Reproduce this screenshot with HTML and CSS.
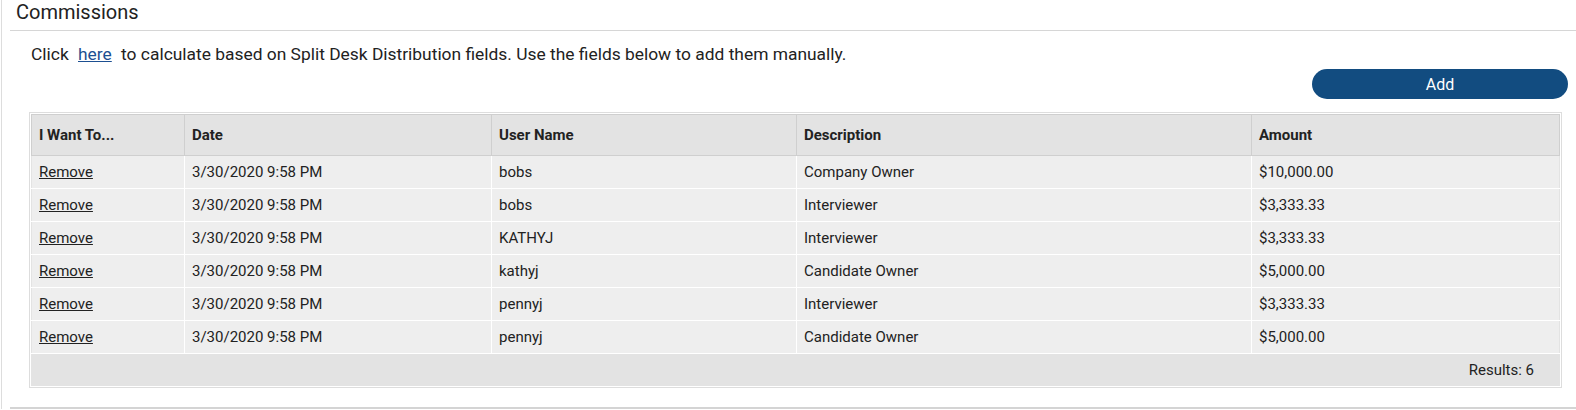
FILE: index.html
```html
<!DOCTYPE html>
<html>
	<head>
		<meta charset="UTF-8">
		<title>Commissions</title>
		<link rel="stylesheet" href="styles.css">
	</head>
	<body>
		<div class="panel">
			<div class="panel_head">
				<h2>Commissions</h2>
			</div>
			<div class="panel_body">
				<p class="intro">Click <a href="#" class="calc_link">here</a> to calculate based on Split Desk Distribution fields. Use the fields below to add them manually.</p>
				<div class="btn_row">
					<button class="add_btn">Add</button>
				</div>
				<div class="grid_box">
					<table class="grid">
						<thead>
							<tr>
								<th class="col_act">I Want To...</th>
								<th class="col_date">Date</th>
								<th class="col_user">User Name</th>
								<th class="col_desc">Description</th>
								<th>Amount</th>
							</tr>
						</thead>
						<tbody>
							<tr>
								<td><a href="#">Remove</a></td>
								<td>3/30/2020 9:58 PM</td>
								<td>bobs</td>
								<td>Company Owner</td>
								<td>$10,000.00</td>
							</tr>
							<tr>
								<td><a href="#">Remove</a></td>
								<td>3/30/2020 9:58 PM</td>
								<td>bobs</td>
								<td>Interviewer</td>
								<td>$3,333.33</td>
							</tr>
							<tr>
								<td><a href="#">Remove</a></td>
								<td>3/30/2020 9:58 PM</td>
								<td>KATHYJ</td>
								<td>Interviewer</td>
								<td>$3,333.33</td>
							</tr>
							<tr>
								<td><a href="#">Remove</a></td>
								<td>3/30/2020 9:58 PM</td>
								<td>kathyj</td>
								<td>Candidate Owner</td>
								<td>$5,000.00</td>
							</tr>
							<tr>
								<td><a href="#">Remove</a></td>
								<td>3/30/2020 9:58 PM</td>
								<td>pennyj</td>
								<td>Interviewer</td>
								<td>$3,333.33</td>
							</tr>
							<tr>
								<td><a href="#">Remove</a></td>
								<td>3/30/2020 9:58 PM</td>
								<td>pennyj</td>
								<td>Candidate Owner</td>
								<td>$5,000.00</td>
							</tr>
						</tbody>
						<tfoot>
							<tr>
								<td colspan="5">Results: 6</td>
							</tr>
						</tfoot>
					</table>
				</div>
			</div>
		</div>
	</body>
</html>
```

FILE: styles.css
```css
html,body,div,h2,p,table{margin: 0; padding: 0;}
body{
	font-family: Roboto, "Liberation Sans", sans-serif;
	color: #222;
	background: #fff;
}
.panel{
	margin-left: 1px;
	border-left: 1px solid #ddd;
}
.panel_head{
	margin-left: 8px;
	height: 30px;
	border-bottom: 1px solid #d6d6d6;
}
.panel_head h2{
	font-size: 20px;
	font-weight: normal;
	line-height: 25px;
	padding-left: 6px;
}
.panel_body{
	margin-left: 8px;
	padding: 11px 14px 19px 19px;
	border-bottom: 2px solid #d4d4d4;
}
.intro{
	font-size: 17.4px;
	line-height: 24px;
	padding-left: 2px;
}
.calc_link{
	color: #1d4f91;
	margin: 0 5px;
}
.btn_row{
	display: flex;
	justify-content: flex-end;
	margin-top: 3px;
	margin-right: -6px;
}
.add_btn{
	width: 256px;
	height: 30px;
	border: none;
	border-radius: 15px;
	background: #124c80;
	color: #fff;
	font-family: Roboto, "Liberation Sans", sans-serif;
	font-size: 16px;
}
.grid_box{
	margin-top: 13px;
	border: 1px solid #ddd;
	padding: 1px;
}
.grid{
	width: 100%;
	border-collapse: collapse;
	font-size: 15px;
}
.grid th{
	background: #e3e3e3;
	height: 40px;
	text-align: left;
	font-weight: bold;
	padding: 0 7px;
	border: 1px solid #cfcfcf;
}
.grid td{
	background: #eee;
	height: 32px;
	padding: 0 7px;
	border: 1px solid #fff;
}
.grid tbody tr:first-child td{
	border-top-color: #cfcfcf;
}
.grid td:first-child{
	border-left-color: #e3e3e3;
}
.grid td:last-child{
	border-right-color: #e3e3e3;
}
.grid td a{
	color: #222;
}
.col_act{width: 138px;}
.col_date{width: 292px;}
.col_user{width: 290px;}
.col_desc{width: 440px;}
.grid tfoot td{
	background: #e3e3e3;
	text-align: right;
	padding-right: 25px;
	height: 31px;
	border-color: #e3e3e3;
}
```
